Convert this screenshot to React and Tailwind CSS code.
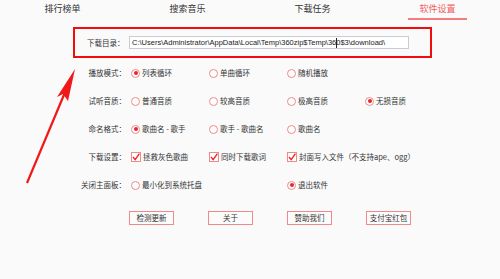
const FONT = { fontFamily: '"Noto Sans CJK SC", "Liberation Sans", sans-serif' }

const TABS = ['排行榜单', '搜索音乐', '下载任务', '软件设置']

const ROWS = [
  { label: '播放模式：', type: 'radio', opts: [['列表循环', true], ['单曲循环'], ['随机播放']] },
  { label: '试听音质：', type: 'radio', opts: [['普通音质'], ['较高音质'], ['极高音质'], ['无损音质', true]] },
  { label: '命名格式：', type: 'radio', opts: [['歌曲名 - 歌手', true], ['歌手 - 歌曲名'], ['歌曲名']] },
  { label: '下载设置：', type: 'check', opts: [['拯救灰色歌曲', true], ['同时下载歌词', true], ['封面写入文件（不支持ape、ogg）', true]] },
  { label: '关闭主面板：', type: 'radio', opts: [['最小化到系统托盘'], null, ['退出软件', true]] },
]

const BUTTONS = ['检测更新', '关于', '赞助我们', '支付宝红包']

function Radio({ on }) {
  return (
    <span className="w-[9px] h-[9px] rounded-full border border-[#f08a8a] bg-white flex items-center justify-center shrink-0">
      {on && <span className="w-[4px] h-[4px] rounded-full bg-[#e8262a]" />}
    </span>
  )
}

function Check({ on }) {
  return (
    <span className="w-[10px] h-[10px] border border-[#f08a8a] bg-white flex items-center justify-center shrink-0">
      {on && (
        <svg width="8" height="8" viewBox="0 0 8 8">
          <path d="M1 4 L3.2 6.6 L7.4 0.6" fill="none" stroke="#e8262a" strokeWidth="1.4" />
        </svg>
      )}
    </span>
  )
}

export default function App() {
  return (
    <div className="relative w-[500px] h-[279px] bg-[#fafafa] overflow-hidden text-[#333]" style={FONT}>
      {/* tabs */}
      <div className="flex h-[20px]">
        {TABS.map((t, i) => (
          <div key={t} className="w-[125px] flex flex-col items-center">
            <div className={`h-[18px] flex items-center text-[9px] ${i === 3 ? 'text-[#f05a5a]' : 'text-[#333]'}`}>{t}</div>
            {i === 3 && <div className="w-[59px] h-[1.5px] bg-[#f47c7c]" />}
          </div>
        ))}
      </div>

      {/* download dir */}
      <div className="ml-[73px] mt-[7px] w-[359px] h-[31px] border-2 border-[#f20d0d] flex items-center">
        <div className="w-[54px] pl-[12px] text-[7.5px] shrink-0">下载目录：</div>
        <div className="w-[280px] h-[13px] bg-white border border-[#c9ccd2] flex items-center pl-[2px] text-[7.5px] text-[#222] whitespace-nowrap overflow-hidden" style={{ fontFamily: '"Liberation Sans", sans-serif' }}>
          C:\Users\Administrator\AppData\Local\Temp\360zip$Temp\36<span className="inline-block w-px h-[10px] bg-[#222] mx-[-0.5px]" />0$3\download\
        </div>
      </div>

      {/* option rows */}
      <div className="mt-[1px]">
        {ROWS.map(row => (
          <div key={row.label} className="flex items-center h-[28px] text-[7.5px]">
            <div className="w-[131px] pr-[5px] text-right shrink-0">{row.label}</div>
            {row.opts.map((o, j) => (
              <div key={j} className="w-[78px] flex items-center gap-[2px] whitespace-nowrap shrink-0">
                {o && (row.type === 'radio' ? <Radio on={o[1]} /> : <Check on={o[1]} />)}
                {o && <span>{o[0]}</span>}
              </div>
            ))}
          </div>
        ))}
      </div>

      {/* buttons */}
      <div className="flex ml-[129px] mt-[12px] gap-[34px]">
        {BUTTONS.map(b => (
          <div key={b} className="w-[45px] h-[14px] border border-[#f08a8a] bg-[#fbfbfb] flex items-center justify-center text-[7.5px]">{b}</div>
        ))}
      </div>

      {/* annotation arrow */}
      <svg className="absolute left-0 top-0 pointer-events-none" width="500" height="279">
        <line x1="27" y1="183" x2="66" y2="90" stroke="#f01818" strokeWidth="2.2" />
        <polygon points="75,69 68,101 63,94 57,97" fill="#f01818" />
      </svg>
    </div>
  )
}
